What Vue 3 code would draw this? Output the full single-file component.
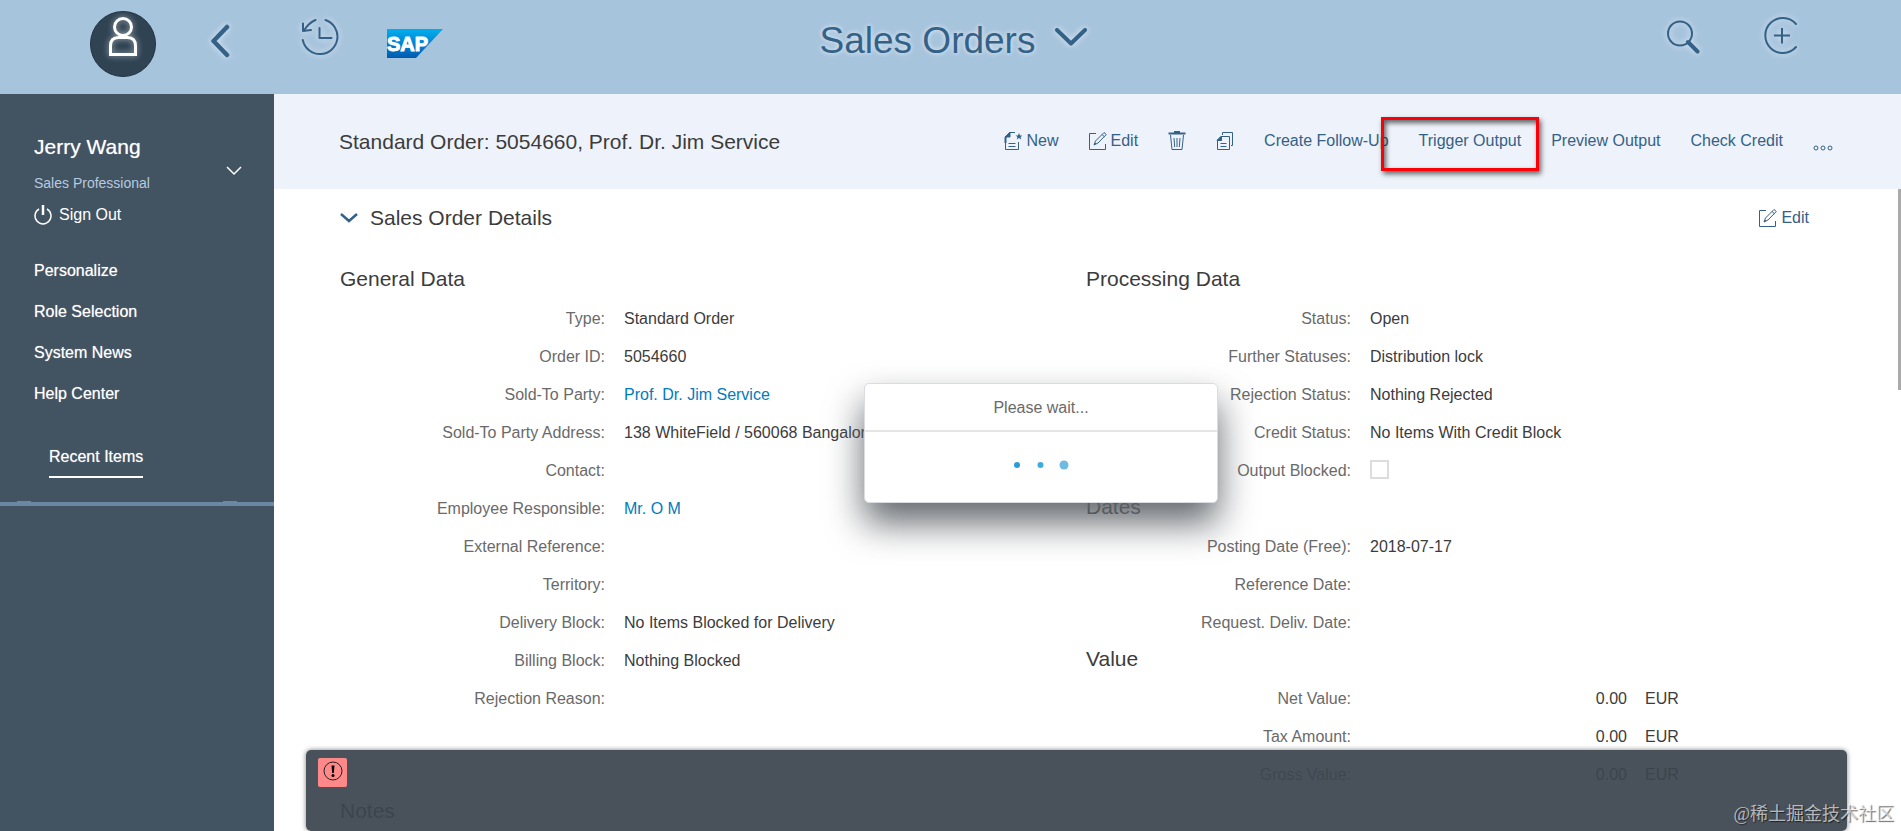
<template>
  <div class="shell">
    <header class="shell-header">
      <nav class="header-left">
        <button class="icon-btn" aria-label="Profile">
          <svg width="66" height="80" viewBox="90 0 66 80">
            <circle cx="123" cy="44" r="32.5" fill="#304353" stroke="#233444" />
            <g class="glow-white" fill="none" stroke="#fff" stroke-width="3">
              <circle cx="123" cy="27" r="8.5" />
              <path d="M110.500 54.500V46q0-8.500 8-8.500h9q8 0 8 8.500v8.500z" />
            </g>
          </svg>
        </button>
        <button class="icon-btn" aria-label="Back">
          <svg class="glow" width="44" height="80" viewBox="199 0 44 80">
            <path d="M227 27L213.500 41L227 55" stroke-width="4.500" />
          </svg>
        </button>
        <button class="icon-btn" aria-label="Recent activities">
          <svg class="glow" width="54" height="80" viewBox="294 0 54 80">
            <path d="M325.500 20a17.500 17.500 0 1 1-22.700 20" stroke-width="2" />
            <path d="M315.500 20q-7 3-11.500 10.500" stroke-width="2" />
            <path d="M303 23.500v7.500l8-1" stroke-width="2" />
            <path d="M319.500 28v10h12" stroke-width="2" />
          </svg>
        </button>
        <a class="icon-btn" href="#" aria-label="SAP">
          <svg width="56" height="80" viewBox="388 0 56 80">
            <defs>
              <linearGradient id="sapBlue" x1="0" y1="0" x2="0" y2="1">
                <stop offset="0" stop-color="#00aeef" />
                <stop offset="1" stop-color="#005bb0" />
              </linearGradient>
            </defs>
            <path d="M388 29h56l-27 29h-29z" fill="url(#sapBlue)" />
            <text x="388" y="51" class="logo-text">SAP</text>
          </svg>
        </a>
      </nav>

      <button class="header-title">
        <span>Sales Orders</span>
        <svg class="glow" width="32" height="80" viewBox="1054 0 32 80">
          <path d="M1056 29l14 13.500l14-13.500" stroke-width="4" />
        </svg>
      </button>

      <nav class="header-right">
        <button class="icon-btn" aria-label="Search">
          <svg class="glow" width="48" height="80" viewBox="1659 0 48 80">
            <circle cx="1680" cy="33.500" r="12" stroke-width="2" />
            <path d="M1688 42l9.500 9.500" stroke-width="4" />
          </svg>
        </button>
        <button class="icon-btn" aria-label="Create">
          <svg class="glow" width="48" height="80" viewBox="1758 0 48 80">
            <path d="M1797 24a17.500 17.500 0 1 0 0 23" stroke-width="2" />
            <path d="M1775 35.500h16M1783 28v15.500" stroke-width="2" stroke-linecap="butt" />
          </svg>
        </button>
      </nav>
    </header>

    <div class="shell-body">
      <aside class="sidebar">
        <div class="user">
          <div>
            <div class="user-name">Jerry Wang</div>
            <div class="user-role">Sales Professional</div>
          </div>
          <button class="user-toggle" aria-label="Expand profile">
            <svg width="16" height="10" viewBox="0 0 16 10">
              <path d="M1 1l7 7l7-7" fill="none" stroke="#fff" stroke-width="1.500" />
            </svg>
          </button>
        </div>
        <button class="sign-out">
          <svg width="18" height="20" viewBox="0 0 18 20" fill="none" stroke="#fff">
            <path d="M5 4a8 8 0 1 0 8 0" stroke-width="1.500" />
            <path d="M9 0v10" stroke-width="2.500" />
          </svg>
          Sign Out
        </button>
        <nav class="side-links">
          <a v-for="link in sideLinks" :key="link" href="#">{{ link }}</a>
        </nav>
        <a class="recent" href="#">Recent Items</a>
        <div class="splitter"></div>
      </aside>

      <main class="main">
        <div class="object-header">
          <h1>Standard Order: 5054660, Prof. Dr. Jim Service</h1>
          <div class="toolbar">
            <button class="tool">
              <svg width="18" height="20" viewBox="0 0 18 20" fill="none" stroke="#346187">
                <path d="M11 1.500H6L1.500 6v12.500h13V11" />
                <path d="M6 1L1 6h5z" fill="#346187" />
                <path d="M1.500 6v6" stroke-width="2" />
                <path d="M4.500 12.500h7M4.500 15.500h7" />
                <path d="M15 2l1 2.500h2.500l-2 1.500l.8 2.500l-2.300-1.500l-2.300 1.500l.8-2.500l-2-1.500H14z" fill="#346187" stroke="none" />
              </svg>
              New
            </button>
            <button class="tool">
              <EditIcon />
              Edit
            </button>
            <button class="tool" aria-label="Delete">
              <svg width="18" height="20" viewBox="0 0 18 20" fill="none" stroke="#346187">
                <path d="M0.500 2.500h17" stroke-width="2" />
                <path d="M6 1h6" stroke-width="2" />
                <path d="M2.500 4l1.500 14.500h10L15.500 4" />
                <path d="M6 7l.7 9M9 7v9M12 7l-.7 9" />
              </svg>
            </button>
            <button class="tool" aria-label="Copy">
              <svg width="18" height="20" viewBox="0 0 18 20" fill="none" stroke="#346187">
                <path d="M6.500 4V1.500h10v13H15" />
                <path d="M13.500 18.500h-12V9L5 5.500h8.500z" />
                <path d="M5.500 5L1 9.500h4.500z" fill="#346187" />
                <path d="M4.500 12.500h6M4.500 15.500h6" />
              </svg>
            </button>
            <button class="tool">Create Follow-Up</button>
            <button class="tool marked">Trigger Output</button>
            <button class="tool">Preview Output</button>
            <button class="tool">Check Credit</button>
            <button class="tool" aria-label="More">
              <svg width="20" height="20" viewBox="0 0 20 20" fill="none" stroke="#346187">
                <circle cx="3" cy="17" r="2" />
                <circle cx="10" cy="17" r="2" />
                <circle cx="17" cy="17" r="2" />
              </svg>
            </button>
          </div>
        </div>

        <section class="details">
          <div class="section-header">
            <button class="section-title">
              <svg width="18" height="10" viewBox="0 0 18 10">
                <path d="M1 1l8 7l8-7" fill="none" stroke="#346187" stroke-width="2.500" />
              </svg>
              Sales Order Details
            </button>
            <button class="tool">
              <EditIcon />
              Edit
            </button>
          </div>

          <div class="columns">
            <div v-for="(column, i) in columns" :key="i">
              <template v-for="group in column" :key="group.title">
                <h2>{{ group.title }}</h2>
                <dl>
                  <div v-for="field in group.fields" :key="field.label" class="field">
                    <dt>
                      <label v-if="field.checkbox" for="output-blocked">{{ field.label }}:</label>
                      <template v-else>{{ field.label }}:</template>
                    </dt>
                    <dd>
                      <input v-if="field.checkbox" id="output-blocked" type="checkbox" />
                      <a v-else-if="field.link" href="#">{{ field.value }}</a>
                      <template v-else-if="field.amount">
                        <span class="amount">{{ field.amount }}</span>
                        <span>EUR</span>
                      </template>
                      <template v-else>{{ field.value }}</template>
                    </dd>
                  </div>
                </dl>
              </template>
            </div>
          </div>
          <h2>Notes</h2>
        </section>

        <div class="scroll-thumb"></div>

        <div class="dialog" role="dialog" aria-label="Please wait">
          <div class="dialog-title">Please wait...</div>
          <div class="dialog-body">
            <svg width="60" height="14" viewBox="0 0 60 14">
              <circle cx="6" cy="7" r="3" fill="#2b9cd8" />
              <circle cx="29.500" cy="7" r="3" fill="#3dade0" />
              <circle cx="53" cy="7" r="4.500" fill="#6dbbe0" />
            </svg>
          </div>
        </div>

        <div class="message-bar">
          <button class="alert-btn" aria-label="Show messages">
            <svg width="20" height="20" viewBox="0 0 20 20">
              <circle cx="10" cy="10" r="9" fill="none" stroke="#222" />
              <path d="M8.500 4.500h3l-.7 7.500H9.200z" />
              <circle cx="10" cy="14.500" r="1.500" />
            </svg>
          </button>
        </div>
      </main>
    </div>

    <div class="watermark">@稀土掘金技术社区</div>
  </div>
</template>

<script setup>
import { h } from 'vue'

// Pencil icon is used in the toolbar and in the section header
const EditIcon = () =>
  h('svg', { width: 18, height: 20, viewBox: '0 0 18 20', fill: 'none', stroke: '#346187' }, [
    h('path', { d: 'M7 2.500H0.500V18.500H16.500V13' }),
    h('path', { d: 'M5 14l1.500-4L15 1.500l2.300 2L9 12z' }),
    h('path', { d: 'M13 3.500l2.500 2.300M5 14l2-2' })
  ])

const sideLinks = ['Personalize', 'Role Selection', 'System News', 'Help Center']

const columns = [
  [
    {
      title: 'General Data',
      fields: [
        { label: 'Type', value: 'Standard Order' },
        { label: 'Order ID', value: '5054660' },
        { label: 'Sold-To Party', value: 'Prof. Dr. Jim Service', link: true },
        { label: 'Sold-To Party Address', value: '138 WhiteField / 560068 Bangalore' },
        { label: 'Contact' },
        { label: 'Employee Responsible', value: 'Mr. O M', link: true },
        { label: 'External Reference' },
        { label: 'Territory' },
        { label: 'Delivery Block', value: 'No Items Blocked for Delivery' },
        { label: 'Billing Block', value: 'Nothing Blocked' },
        { label: 'Rejection Reason' }
      ]
    }
  ],
  [
    {
      title: 'Processing Data',
      fields: [
        { label: 'Status', value: 'Open' },
        { label: 'Further Statuses', value: 'Distribution lock' },
        { label: 'Rejection Status', value: 'Nothing Rejected' },
        { label: 'Credit Status', value: 'No Items With Credit Block' },
        { label: 'Output Blocked', checkbox: true }
      ]
    },
    {
      title: 'Dates',
      fields: [
        { label: 'Posting Date (Free)', value: '2018-07-17' },
        { label: 'Reference Date' },
        { label: 'Request. Deliv. Date' }
      ]
    },
    {
      title: 'Value',
      fields: [
        { label: 'Net Value', amount: '0.00' },
        { label: 'Tax Amount', amount: '0.00' },
        { label: 'Gross Value', amount: '0.00' }
      ]
    }
  ]
]
</script>

<style>
body {
  margin: 0;
}
</style>

<style scoped>
.shell {
  position: relative;
  display: flex;
  flex-direction: column;
  height: 100vh;
  overflow: hidden;
  background: #fff;
  color: #3c3c3c;
  font-family: "Liberation Sans", Arial, sans-serif;
  font-size: 16px;
  line-height: 20px;
}

button {
  padding: 0;
  border: none;
  background: none;
  color: inherit;
  font: inherit;
  cursor: pointer;
}

a {
  color: inherit;
  text-decoration: none;
}

/* Header */
.shell-header {
  display: grid;
  grid-template-columns: 1fr auto 1fr;
  flex: none;
  height: 94px;
  background: #a7c4dd;
}

.header-left {
  display: grid;
  grid-template-columns: 98px 98px 102px 86px;
  padding-left: 74px;
}

.header-right {
  display: grid;
  grid-template-columns: 98px 98px;
  justify-content: end;
  padding-right: 71px;
}

.icon-btn {
  display: flex;
  justify-content: center;
  align-items: flex-start;
}

.glow {
  fill: none;
  stroke: #346187;
  stroke-linecap: round;
  stroke-linejoin: round;
  filter: drop-shadow(0 0 3px rgba(255, 255, 255, 0.7));
}

.glow-white {
  filter: drop-shadow(0 0 3px rgba(255, 255, 255, 0.6));
}

.logo-text {
  fill: #fff;
  stroke: #fff;
  stroke-width: 1px;
  font-size: 20px;
  font-weight: bold;
}

.header-title {
  display: flex;
  align-items: center;
  gap: 20px;
  height: 82px;
  padding-left: 6px;
  color: #346187;
  font-size: 37px;
  line-height: 44px;
  text-shadow: 0 0 5px rgba(255, 255, 255, 0.8);
}

.shell-body {
  display: flex;
  flex: 1;
  min-height: 0;
}

/* Sidebar */
.sidebar {
  display: flex;
  flex-direction: column;
  flex: none;
  width: 274px;
  padding-top: 40px;
  box-sizing: border-box;
  background: #425361;
  color: #fff;
  text-shadow: 0 0 1px rgba(255, 255, 255, 0.6);
}

.user {
  display: flex;
  justify-content: space-between;
  align-items: center;
  padding: 0 32px 0 34px;
}

.user-name {
  margin-bottom: 14px;
  font-size: 21px;
  line-height: 26px;
}

.user-role {
  color: #b5cbe0;
  font-size: 14px;
  line-height: 18px;
  text-shadow: none;
}

.user-toggle {
  display: flex;
  padding-top: 16px;
}

.sign-out {
  display: flex;
  align-items: center;
  gap: 7px;
  margin: 13px 0 36px 34px;
}

.side-links {
  display: flex;
  flex-direction: column;
  gap: 21px;
  padding-left: 34px;
}

.recent {
  align-self: flex-start;
  margin: 43px 0 24px 49px;
  padding-bottom: 9px;
  border-bottom: 2px solid #fff;
}

.splitter {
  position: relative;
  height: 4px;
  background: #6b87a3;
}

.splitter::before,
.splitter::after {
  content: "";
  position: absolute;
  top: -1px;
  width: 14px;
  height: 1px;
  background: #6b87a3;
}

.splitter::before {
  left: 17px;
}

.splitter::after {
  right: 37px;
}

/* Content */
.main {
  position: relative;
  flex: 1;
  min-width: 0;
  overflow: hidden;
}

.object-header {
  display: flex;
  justify-content: space-between;
  align-items: center;
  height: 95px;
  padding: 0 68px 0 65px;
  box-sizing: border-box;
  background: #eef3fb;
}

h1,
h2 {
  margin: 0;
  font-size: 21px;
  font-weight: normal;
}

h1 {
  line-height: 24px;
}

h2 {
  padding-bottom: 2px;
  line-height: 36px;
}

.toolbar {
  display: flex;
  align-items: center;
  gap: 30px;
  padding-bottom: 2px;
}

.tool {
  position: relative;
  display: flex;
  align-items: center;
  gap: 4px;
  color: #346187;
  white-space: nowrap;
}

.marked::after {
  content: "";
  position: absolute;
  inset: -14px -18px -20px -38px;
  border: 3px solid #fb0007;
  box-shadow: 2px 3px 5px rgba(0, 0, 0, 0.6), inset 2px 3px 5px rgba(0, 0, 0, 0.6);
}

.details {
  padding: 0 69px 0 66px;
}

.section-header {
  display: flex;
  justify-content: space-between;
  align-items: center;
  height: 58px;
  margin-bottom: 14px;
  padding-right: 23px;
}

.section-title {
  display: flex;
  align-items: center;
  gap: 12px;
  font-size: 21px;
  line-height: 26px;
}

.columns {
  display: grid;
  grid-template-columns: 1fr 1fr;
}

dl,
dd {
  margin: 0;
}

.field {
  display: grid;
  grid-template-columns: 265px 1fr;
  gap: 19px;
  align-items: center;
  height: 38px;
  padding-top: 2px;
  box-sizing: border-box;
}

dt {
  color: #6a6a6a;
  text-align: right;
}

dd {
  display: flex;
  align-items: center;
  gap: 18px;
  white-space: nowrap;
}

dd a {
  color: #007cc0;
}

.amount {
  width: 257px;
  text-align: right;
}

input[type="checkbox"] {
  appearance: none;
  width: 19px;
  height: 19px;
  margin: 0 0 4px;
  border: 2px solid #ddd;
  background: #fff;
}

.scroll-thumb {
  position: absolute;
  top: 95px;
  right: 0;
  width: 3px;
  height: 201px;
  background: #aaa;
}

/* Busy dialog */
.dialog {
  position: absolute;
  top: 289px;
  left: 590px;
  width: 354px;
  height: 120px;
  box-sizing: border-box;
  border: 1px solid #d9dde3;
  border-radius: 5px;
  background: #fff;
  box-shadow: 0 20px 36px rgba(96, 101, 106, 0.98);
}

.dialog-title {
  padding-top: 2px;
  border-bottom: 2px solid #e5e5e5;
  color: #6a6a6a;
  line-height: 44px;
  text-align: center;
}

.dialog-body {
  display: flex;
  justify-content: center;
  padding-top: 26px;
}

.message-bar {
  position: absolute;
  right: 54px;
  bottom: 0;
  left: 32px;
  height: 81px;
  padding: 8px 12px;
  box-sizing: border-box;
  border-radius: 5px;
  background: rgba(59, 69, 79, 0.93);
  box-shadow: 0 0 5px rgba(0, 0, 0, 0.5);
}

.alert-btn {
  display: flex;
  justify-content: center;
  width: 29px;
  height: 29px;
  padding-top: 3px;
  border-radius: 2px;
  background: #ff8888;
}

.watermark {
  position: absolute;
  right: 7px;
  bottom: 5px;
  color: rgba(255, 255, 255, 0.65);
  font-family: "Liberation Serif", "Noto Sans CJK SC", serif;
  font-size: 18px;
  line-height: 24px;
  text-shadow: 1px 1px 1px rgba(0, 0, 0, 0.6);
}
</style>
